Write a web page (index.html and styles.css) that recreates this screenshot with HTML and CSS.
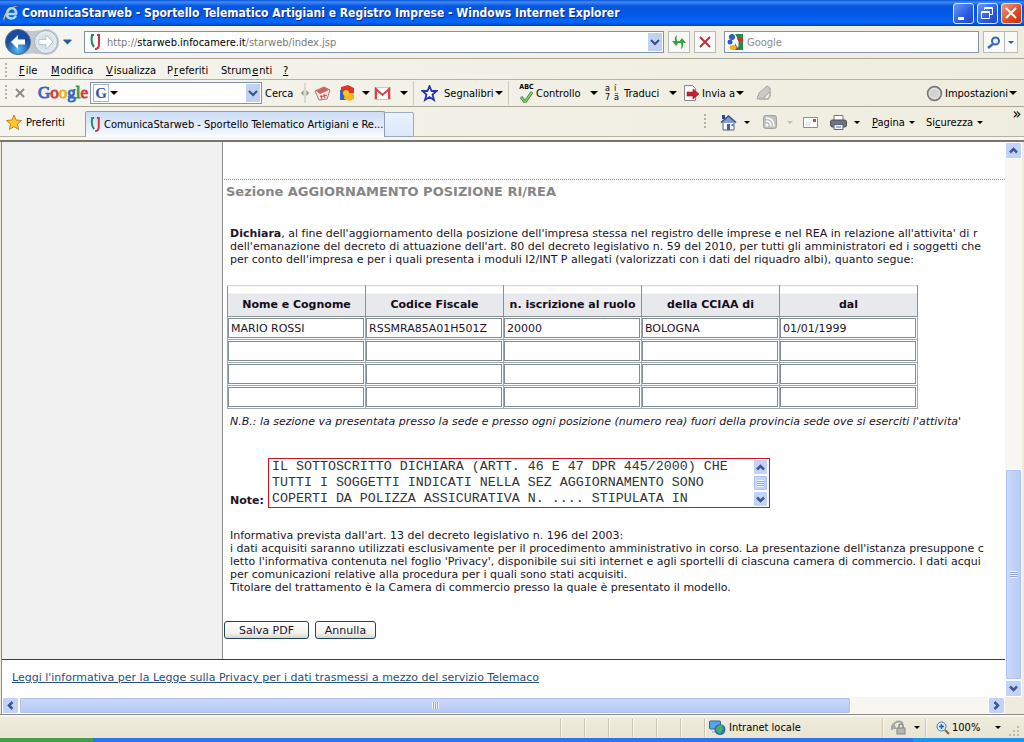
FILE: index.html
```html
<!DOCTYPE html>
<html lang="it">
<head>
<meta charset="utf-8">
<title>ComunicaStarweb</title>
<link rel="stylesheet" href="styles.css">
</head>
<body>
<header class="titlebar">
  <svg width="17" height="18" viewBox="0 0 17 18"><path d="M4 10h10c1-7-8-8-9-1-1 6 6 7 9 3" fill="none" stroke="#9fdcff" stroke-width="2.600"/><path d="M2 17C-1 13 8 1 16 2c-6 1-13 8-14 15" fill="#e8c85a"/></svg>
  <h1 class="caption">ComunicaStarweb - Sportello Telematico Artigiani e Registro Imprese - Windows Internet Explorer</h1>
  <button class="win" aria-label="Riduci a icona"><svg width="18" height="18"><path d="M4 13h6v3H4z" fill="#fff"/></svg></button>
  <button class="win" aria-label="Ripristina"><svg width="18" height="18" fill="none" stroke="#fff"><path d="M6.500 6V3.500h8v7H12M6 4.500h9M3.500 7.500h8v7h-8zM3 8.500h9"/></svg></button>
  <button class="win close" aria-label="Chiudi"><svg width="18" height="18"><path d="M4 4l10 10M14 4L4 14" stroke="#fff" stroke-width="2"/></svg></button>
</header>

<section class="addressbar">
  <div class="nav">
    <svg width="54" height="28" viewBox="0 0 54 28">
      <defs>
        <radialGradient id="blue" cy=".8"><stop offset="0" stop-color="#55c0f5"/><stop offset="1" stop-color="#1c4a9c"/></radialGradient>
        <radialGradient id="pale"><stop offset="0" stop-color="#c2d2e2"/><stop offset="1" stop-color="#e6edf3"/></radialGradient>
      </defs>
      <path d="M13 1q14 4 28 0a13 13 0 010 26q-14-3-28 0a13 13 0 010-26z" fill="#c3c8ce"/>
      <circle cx="13" cy="14" r="12.500" fill="url(#blue)" stroke="#50698f"/>
      <circle cx="41" cy="14" r="11.500" fill="url(#pale)" stroke="#a4b0be"/>
      <path d="M6 14l7-7v4.500h7v5h-7V21z" fill="#fff"/>
      <path d="M48 14l-7-7v4.500h-7v5h7V21z" fill="#fff" stroke="#a7b8ca" stroke-width=".7"/>
    </svg>
    <svg width="9" height="6"><path d="M.5.500h8v1l-4 4-4-4z" fill="#2a5c9c"/></svg>
  </div>
  <div class="address">
    <svg width="11" height="16" viewBox="0 0 11 16"><path d="M4 1H2Q.500 9 4 13" fill="none" stroke="#1c8562" stroke-width="2"/><path d="M7 1h2v9q0 5-4 5" fill="none" stroke="#d03048" stroke-width="2"/></svg>
    <p class="url">http://<span class="host">starweb.infocamere.it</span>/starweb/index.jsp</p>
    <button class="drop" aria-label="Mostra indirizzi"><svg width="10" height="7"><path d="M1 1l4 4 4-4" fill="none" stroke="#33518c" stroke-width="2"/></svg></button>
  </div>
  <button class="sq" aria-label="Aggiorna"><svg width="16" height="16"><path d="M6 1q-3 2-2 6H1l4 5 4-5H6q-1-3 0-6zM10 15q3-2 2-6h3l-4-5-4 5h3q1 3 0 6z" fill="#37a343"/></svg></button>
  <button class="sq" aria-label="Interrompi"><svg width="12" height="12"><path d="M1 1l10 10M11 1L1 11" stroke="#b5343c" stroke-width="2"/></svg></button>
  <div class="search">
    <svg width="16" height="16"><path d="M8 0h8v16h-6q4-8-2-16z" fill="#20904a"/><path d="M10 3h6v5q-6 1-6-5" fill="#d92e2e"/><path d="M8 16V9l4 7z" fill="#d92e2e"/><circle cx="5" cy="3" r="3" fill="#2d5fb8"/><circle cx="3" cy="8" r="2.500" fill="#2d5fb8"/><ellipse cx="6" cy="13.500" rx="3.500" ry="2.500" fill="#f0b018"/></svg>
    <input class="field" type="text" placeholder="Google" aria-label="Cerca con Google">
  </div>
  <div class="go">
    <button class="gobtn" aria-label="Cerca"><svg width="14" height="13"><circle cx="8.500" cy="5" r="3.500" fill="#e2efff" stroke="#3a68b0" stroke-width="2"/><path d="M6 8l-5 4" stroke="#3a68b0" stroke-width="2.500"/></svg></button>
    <button class="gobtn" aria-label="Opzioni di ricerca"><i class="caret blue"></i></button>
  </div>
</section>

<nav class="menubar">
  <i class="grip"></i>
  <button class="flat"><u>F</u>ile</button>
  <button class="flat"><u>M</u>odifica</button>
  <button class="flat"><u>V</u>isualizza</button>
  <button class="flat">P<u>r</u>eferiti</button>
  <button class="flat">Strum<u>e</u>nti</button>
  <button class="flat"><u>?</u></button>
</nav>

<section class="googlebar">
  <i class="grip"></i>
  <button class="flat" aria-label="Chiudi barra"><svg width="10" height="10"><path d="M1 1l8 8M9 1L1 9" stroke="#8a8a86" stroke-width="2"/></svg></button>
  <span class="logo"><span class="b">G</span><span class="r">o</span><span class="y">o</span><span class="b">g</span><span class="g">l</span><span class="r">e</span></span>
  <div class="gbox">
    <span class="glyph">G</span><i class="caret"></i>
    <input class="field" type="text" aria-label="Testo da cercare">
    <button class="drop" aria-label="Ricerche recenti"><svg width="10" height="7"><path d="M1 1l4 4 4-4" fill="none" stroke="#33518c" stroke-width="2"/></svg></button>
  </div>
  <button class="flat">Cerca</button>
  <svg width="8" height="20"><path d="M4 0v20" stroke="#c5c2b2"/><path d="M2.500 7v6L0 10zM5.500 7v6L8 10z" fill="#8f8f8a"/></svg>
  <svg width="17" height="16" viewBox="0 0 17 16"><path d="M1 6l9-4 6 3-3 9-8 1z" fill="#f7e6e2" stroke="#9c7c7a"/><path d="M2 6l8-4 5 3-9 4z" fill="#d0605c"/><path d="M7 10l1 4M10 9l1 4M6 12l7-2" stroke="#c05050" fill="none"/></svg>
  <svg width="16" height="16"><path d="M1 5h6v10H1z" fill="#2e62c4"/><path d="M6 6h9v8l-4 2-6-2z" fill="#f4b81e"/><path d="M2 2l7-2 6 3v5H8L2 6z" fill="#df3428"/><circle cx="7" cy="8" r="3" fill="#f4c81e"/></svg>
  <i class="caret"></i>
  <svg width="17" height="13"><path d="M.5.500h16v12H.5z" fill="#fff" stroke="#ddc0ba"/><path d="M2 12V2l6.500 6L15 2v10" fill="none" stroke="#d8434a" stroke-width="2"/></svg>
  <i class="caret"></i>
  <i class="rule"></i>
  <svg width="17" height="17"><path d="M8.500 1l2 5h5l-4 3.500 1.500 5.500-4.500-3L4 15l1.500-5.500-4-3.500h5z" fill="#fff" stroke="#2836b4" stroke-width="1.800"/></svg>
  <button class="flat">Segnalibri<i class="caret"></i></button>
  <i class="rule"></i>
  <span class="spell"><span class="abc">ABC</span><svg width="13" height="12"><path d="M1 6l4 5 7-10" fill="none" stroke="#3c7a34" stroke-width="3"/><path d="M1 6l4 5 7-10" fill="none" stroke="#8bd070" stroke-width="1.500"/></svg></span>
  <button class="flat">Controllo</button>
  <i class="caret"></i>
  <span class="tr"><span>a</span><span>í</span><span>7</span><span>ä</span></span>
  <button class="flat">Traduci</button>
  <i class="caret"></i>
  <svg width="17" height="16"><path d="M1.500.500h8l3 3v12h-11z" fill="#fff" stroke="#8b8b92"/><path d="M4 7h6V4l6 5-6 5v-3H4z" fill="#c8202c" stroke="#951520" stroke-width=".6"/></svg>
  <button class="flat">Invia a<i class="caret"></i></button>
  <svg width="15" height="16"><path d="M1 14l2-6 8-7q4 1 3 5L8 13z" fill="#c9c9c5" stroke="#a5a5a1"/><path d="M3 14h9l2-3V6" fill="none" stroke="#b8b8b4" stroke-width="2"/></svg>
  <span></span>
  <svg width="17" height="17"><circle cx="8.500" cy="8.500" r="7" fill="#bdbdb9" stroke="#777" stroke-width="1.500"/><circle cx="8.500" cy="8.500" r="5" fill="#d2d2ce" stroke="#eee"/></svg>
  <button class="flat">Impostazioni<i class="caret"></i></button>
</section>

<section class="tabbar">
  <button class="fav"><svg width="16" height="16"><path d="M8 1l2 5 5.500.500-4 3.500 1 5.500L8 12.500l-4.500 3 1-5.500-4-3.500L6 6z" fill="#ffc62e" stroke="#c4821c"/></svg>Preferiti</button>
  <div class="tabs">
    <button class="tab"><svg width="11" height="15" viewBox="0 0 11 16"><path d="M4 1H2Q.500 9 4 13" fill="none" stroke="#1c8562" stroke-width="2"/><path d="M7 1h2v9q0 5-4 5" fill="none" stroke="#d03048" stroke-width="2"/></svg><span class="tabname">ComunicaStarweb - Sportello Telematico Artigiani e Re...</span></button>
    <button class="newtab" aria-label="Nuova scheda"></button>
  </div>
  <div class="commands">
    <i class="grip"></i>
    <svg width="17" height="17"><path d="M3 8h11v8H3z" fill="#f2f5fb" stroke="#53648c"/><path d="M1 8.500L8.500 2 16 8.500" fill="#7f9bd0" stroke="#34508a" stroke-width="1.500"/><path d="M2 1h3v4H2z" fill="#2f4b85"/><path d="M7 10h3v6H7z" fill="#3f5f9d"/><path d="M11.500 10h2v2h-2z" fill="#3a83c8"/></svg>
    <i class="caret small"></i>
    <svg width="14" height="14"><rect x=".5" y=".5" width="13" height="13" rx="2" fill="#c0c0bc" stroke="#a3a39f"/><circle cx="4" cy="10" r="1.500" fill="#fff"/><path d="M3 6q5 0 5 5.500M3 3q8 0 8 8.500" fill="none" stroke="#fff" stroke-width="1.500"/></svg>
    <i class="caret small off"></i>
    <svg width="15" height="11"><path d="M.5.500h14v10H.5z" fill="#fff" stroke="#8e8e8c"/><path d="M10 2h3v3h-3z" fill="#d04848"/><path d="M3 6h5M3 8h4" stroke="#d4d4d4"/></svg>
    <svg width="17" height="15"><path d="M4 .500h9V6H4z" fill="#fff" stroke="#777"/><rect x=".5" y="5" width="16" height="7" rx="2" fill="#70747c" stroke="#4b4f58"/><path d="M4 9.500h9v5H4z" fill="#eef4fb" stroke="#5a6578"/><path d="M6 12h5" stroke="#4a7cc0"/></svg>
    <i class="caret small"></i>
    <button class="flat"><span><u>P</u>agina</span><i class="caret small"></i></button>
    <button class="flat"><span>Si<u>c</u>urezza</span><i class="caret small"></i></button>
    <button class="flat more" aria-label="Altri comandi">»</button>
  </div>
</section>

<div class="viewport">
  <main class="page">
    <div class="columns">
      <aside class="side"></aside>
      <form class="content">
        <h2 class="heading">Sezione AGGIORNAMENTO POSIZIONE RI/REA</h2>
        <p class="text"><strong>Dichiara</strong>, al fine dell'aggiornamento della posizione dell'impresa stessa nel registro delle imprese e nel REA in relazione all'attivita' di r<br>dell'emanazione del decreto di attuazione dell'art. 80 del decreto legislativo n. 59 del 2010, per tutti gli amministratori ed i soggetti che<br>per conto dell'impresa e per i quali presenta i moduli I2/INT P allegati (valorizzati con i dati del riquadro albi), quanto segue:</p>
        <table class="grid">
          <thead>
            <tr><th>Nome e Cognome</th><th>Codice Fiscale</th><th>n. iscrizione al ruolo</th><th>della CCIAA di</th><th>dal</th></tr>
          </thead>
          <tbody>
            <tr><td><input type="text" aria-label="Nome e Cognome 1" value="MARIO ROSSI"></td><td><input type="text" aria-label="Codice Fiscale 1" value="RSSMRA85A01H501Z"></td><td><input type="text" aria-label="n. iscrizione al ruolo 1" value="20000"></td><td><input type="text" aria-label="della CCIAA di 1" value="BOLOGNA"></td><td><input type="text" aria-label="dal 1" value="01/01/1999"></td></tr>
            <tr><td><input type="text" aria-label="Nome e Cognome 2"></td><td><input type="text" aria-label="Codice Fiscale 2"></td><td><input type="text" aria-label="n. iscrizione al ruolo 2"></td><td><input type="text" aria-label="della CCIAA di 2"></td><td><input type="text" aria-label="dal 2"></td></tr>
            <tr><td><input type="text" aria-label="Nome e Cognome 3"></td><td><input type="text" aria-label="Codice Fiscale 3"></td><td><input type="text" aria-label="n. iscrizione al ruolo 3"></td><td><input type="text" aria-label="della CCIAA di 3"></td><td><input type="text" aria-label="dal 3"></td></tr>
            <tr><td><input type="text" aria-label="Nome e Cognome 4"></td><td><input type="text" aria-label="Codice Fiscale 4"></td><td><input type="text" aria-label="n. iscrizione al ruolo 4"></td><td><input type="text" aria-label="della CCIAA di 4"></td><td><input type="text" aria-label="dal 4"></td></tr>
          </tbody>
        </table>
        <p class="text nb">N.B.: la sezione va presentata presso la sede e presso ogni posizione (numero rea) fuori della provincia sede ove si eserciti l'attivita'</p>
        <div class="notes">
          <label for="note">Note:</label>
          <div class="notebox">
            <textarea id="note" rows="3">IL SOTTOSCRITTO DICHIARA (ARTT. 46 E 47 DPR 445/2000) CHE
TUTTI I SOGGETTI INDICATI NELLA SEZ AGGIORNAMENTO SONO
COPERTI DA POLIZZA ASSICURATIVA N. .... STIPULATA IN</textarea>
            <div class="vbar mini">
              <i class="arrow"><svg width="9" height="7"><path d="M1 5.500l3.500-3.500L8 5.500" fill="none" stroke="#41578c" stroke-width="2.500"/></svg></i>
              <i class="thumb"><i class="ridges"></i></i>
              <i class="arrow"><svg width="9" height="7"><path d="M1 1.500L4.500 5 8 1.500" fill="none" stroke="#41578c" stroke-width="2.500"/></svg></i>
            </div>
          </div>
        </div>
        <p class="text">Informativa prevista dall'art. 13 del decreto legislativo n. 196 del 2003:<br>i dati acquisiti saranno utilizzati esclusivamente per il procedimento amministrativo in corso. La presentazione dell'istanza presuppone c<br>letto l'informativa contenuta nel foglio 'Privacy', disponibile sui siti internet e agli sportelli di ciascuna camera di commercio. I dati acqui<br>per comunicazioni relative alla procedura per i quali sono stati acquisiti.<br>Titolare del trattamento è la Camera di commercio presso la quale è presentato il modello.</p>
        <div class="actions">
          <button type="button" class="xp wide">Salva PDF</button>
          <button type="button" class="xp">Annulla</button>
        </div>
      </form>
    </div>
    <footer class="foot"><a href="#privacy">Leggi l'informativa per la Legge sulla Privacy per i dati trasmessi a mezzo del servizio Telemaco</a></footer>
  </main>
  <div class="vbar main">
    <i class="arrow"><svg width="9" height="7"><path d="M1 5.500l3.500-3.500L8 5.500" fill="none" stroke="#41578c" stroke-width="2.500"/></svg></i>
    <i class="thumb"><i class="ridges"></i></i>
    <i class="arrow"><svg width="9" height="7"><path d="M1 1.500L4.500 5 8 1.500" fill="none" stroke="#41578c" stroke-width="2.500"/></svg></i>
  </div>
  <div class="hbar">
    <i class="arrow"><svg width="7" height="9"><path d="M5.500 1L2 4.500 5.500 8" fill="none" stroke="#41578c" stroke-width="2.500"/></svg></i>
    <i class="thumb"><i class="ridges upright"></i></i>
    <i class="arrow"><svg width="7" height="9"><path d="M1.500 1L5 4.500 1.500 8" fill="none" stroke="#41578c" stroke-width="2.500"/></svg></i>
  </div>
  <i class="corner"></i>
</div>

<section class="status">
  <span></span><i class="pane"></i><i class="pane"></i><i class="pane"></i><i class="pane"></i><i class="pane"></i><i class="pane"></i>
  <span class="pane zone"><svg width="17" height="16"><rect x=".5" y="1" width="11" height="8" rx="1" fill="#52a8e8" stroke="#3a5c94"/><path d="M3 11h6v2H3z" fill="#b9c4d4"/><circle cx="11" cy="9.500" r="5.500" fill="#2b6fc0"/><path d="M7 8q3-4 6-3l1 4-3 5q-4-2-4-6" fill="#48b060"/></svg>Intranet locale</span>
  <span class="pane guard"><svg width="16" height="15"><path d="M1 10a7 7 0 0111-7" fill="none" stroke="#a5a5a2" stroke-width="2"/><path d="M0 9l3-5 3 5z" fill="#a5a5a2"/><rect x="6" y="8" width="8" height="6" fill="#b5b5b2" stroke="#858583"/><path d="M8 8V5q2-2 4 0v3" fill="none" stroke="#858583" stroke-width="1.500"/></svg><i class="caret small"></i></span>
  <span class="pane zoom"><svg width="14" height="14"><circle cx="5.500" cy="5.500" r="4.500" fill="#d8ecff" stroke="#3a78c0"/><path d="M3 5.500h5M5.500 3v5" stroke="#2560b0" stroke-width="1.500"/><path d="M9 9l4 4" stroke="#8a6040" stroke-width="2"/></svg><span>100%</span><i class="caret small"></i></span>
  <svg class="size" width="12" height="12"><path d="M9 1h2v2H9zM5 5h2v2H5zM9 5h2v2H9zM1 9h2v2H1zM5 9h2v2H5zM9 9h2v2H9z" fill="#c0bca6"/></svg>
</section>
<div class="taskbar"><i class="start"></i><i class="tray"></i></div>
</body>
</html>
```
FILE: styles.css
```css
* { box-sizing: border-box; }
html, body { height: 100%; }
body {
  margin: 0;
  display: flex;
  flex-direction: column;
  overflow: hidden;
  background: #efecdd;
  color: #000;
  font: 11px/13px "DejaVu Sans Condensed", "DejaVu Sans", sans-serif;
  font-variant-ligatures: none;
}
svg { display: block; flex: none; }
button, input, textarea { font: inherit; color: inherit; margin: 0; padding: 0; }
button { background: none; border: 0; }
p, h1, h2 { margin: 0; }

.titlebar {
  display: flex;
  align-items: center;
  gap: 3px;
  height: 26px;
  padding: 0 2px;
  background: linear-gradient(#0a52d8, #3d8cf5 2px, #0556e0 6px, #0459ea 16px, #0568fb 22px, #0340bc);
  flex: none;
}
.caption {
  flex: 1;
  overflow: hidden;
  color: #fff;
  font: bold 12px/18px "DejaVu Sans Condensed", "DejaVu Sans", sans-serif;
  text-shadow: 1px 1px #0a2a80;
  white-space: nowrap;
}
.win {
  width: 21px;
  height: 21px;
  border: 1px solid #e4ecfb;
  border-radius: 3px;
  background: linear-gradient(135deg, #6c98f2, #2a5be0 60%, #1f48c4);
}
.win.close { background: linear-gradient(135deg, #ee9a7c, #de4a22 60%, #b8350f); }

.addressbar {
  display: grid;
  grid-template-columns: 80px 1fr 22px 22px 259px 35px;
  gap: 4px;
  align-items: center;
  height: 33px;
  padding: 0 6px 0 0;
  border-bottom: 1px solid #aaa796;
  background: linear-gradient(90deg, #f6f5f0, #efedde);
  flex: none;
}
.nav { display: flex; align-items: center; gap: 4px; padding-left: 5px; }
.address, .search, .gbox {
  display: flex;
  align-items: center;
  height: 22px;
  border: 1px solid #8095ad;
  background: #fff;
}
.address { padding: 0 1px 0 5px; gap: 6px; }
.url { flex: 1; color: #7b7b7b; white-space: nowrap; }
.host { color: #000; }
.drop {
  display: grid;
  place-items: center;
  width: 14px;
  height: 18px;
  background: #c0d1f4;
  flex: none;
}
.sq, .gobtn { display: grid; place-items: center; border: 1px solid #b7babd; background: #f9f9f8; height: 22px; }
.search { margin-left: 4px; padding-left: 2px; gap: 4px; }
.field { flex: 1; min-width: 0; border: 0; background: none; outline: 0; }
.field::placeholder { color: #8a8a8a; opacity: 1; }
.go { display: grid; grid-template-columns: 22px 13px; }
.gobtn + .gobtn { border-left: 0; }

.caret {
  display: inline-block;
  border: 4px solid transparent;
  border-top-color: #000;
  border-bottom: 0;
  width: 0;
  height: 0;
  flex: none;
}
.caret.small { border-width: 3px 3px 0; }
.caret.blue { border-width: 3px 3px 0; border-top-color: #2a5c9c; }
.caret.off { border-top-color: #bbb; }
.grip {
  width: 2px;
  height: 16px;
  background: repeating-linear-gradient(#b5b2a2 0 2px, transparent 2px 4px);
}
.flat { display: inline-flex; align-items: center; gap: 1px; white-space: nowrap; }

.menubar {
  display: grid;
  grid-template-columns: 14px 32px 55px 61px 54px 62px 20px;
  align-items: center;
  height: 21px;
  padding: 3px 0 0 5px;
  border-bottom: 1px solid #b5b2a2;
  background: linear-gradient(90deg, #f5f4ee, #efedde);
  flex: none;
}
.googlebar {
  display: grid;
  grid-template-columns: 10px 23px 52px 175px 36px 13px 25px 23px 12px 26px 13px 8px 23px 64px 9px 19px 54px 15px 19px 45px 14px 19px 54px 15px 1fr 19px 75px;
  align-items: center;
  height: 27px;
  padding: 0 4px 0 5px;
  border-bottom: 1px solid #aaa796;
  background: linear-gradient(90deg, #f5f4ee, #efedde);
  flex: none;
}
.logo { font: 17px/20px "Liberation Serif", serif; -webkit-text-stroke: 1px; }
.logo .b { color: #3a66c8; }
.logo .r { color: #d0403c; }
.logo .y { color: #e4b424; }
.logo .g { color: #34a04c; }
.gbox { width: 172px; padding: 0 1px 0 2px; gap: 1px; }
.glyph { border: 1px solid #a9b4c4; color: #2f56a8; width: 16px; text-align: center; font: bold 15px/16px "Liberation Serif", serif; }
.rule { width: 1px; height: 24px; background: #cbc8b8; }
.spell { display: grid; justify-items: center; }
.abc { font: bold 7px/7px "DejaVu Sans Condensed", sans-serif; }
.tr { display: grid; grid-template-columns: 9px 7px; font-size: 9px; line-height: 9px; }

.tabbar {
  display: flex;
  align-items: center;
  height: 35px;
  border-bottom: 2px solid #77756c;
  background: linear-gradient(transparent 29px, #b5b2a2 29px 30px, #f6f5f0 30px), linear-gradient(90deg, #f5f4ee, #efedde);
  flex: none;
}
.fav { display: flex; align-items: center; gap: 4px; width: 85px; padding: 0 0 3px 6px; height: 33px; }
.tabs { display: flex; align-items: flex-end; align-self: flex-start; height: 30px; flex: 1; min-width: 0; }
.tab {
  display: flex;
  align-items: center;
  gap: 3px;
  min-width: 299px;
  height: 26px;
  padding: 0 1px 0 4px;
  border: 1px solid #8f9db4;
  border-bottom: 0;
  border-radius: 2px 2px 0 0;
  background: linear-gradient(#cbddf8, #e4edfb 60%, #fbfcfe);
  text-align: left;
}
.tabname { white-space: nowrap; }
.newtab { width: 29px; height: 25px; border: 1px solid #9aaac0; border-left: 0; border-radius: 0 2px 2px 0; background: linear-gradient(#eaf2fd, #dce9fa); }
.commands {
  display: grid;
  grid-template-columns: 16px 24px 19px 24px 16px 27px 24px 18px 54px 76px 22px;
  align-items: center;
  height: 33px;
  padding: 0 0 3px;
}
.commands .flat { gap: 4px; }
.commands .more { font-size: 16px; align-self: start; justify-self: center; padding-left: 8px; }

.viewport {
  display: grid;
  grid-template: 1fr 17px / 1fr 17px;
  flex: 1;
  min-height: 0;
  margin: 0 2px 0 1px;
  border-left: 1px solid #8e8c82;
}
.page {
  display: flex;
  flex-direction: column;
  min-width: 0;
  min-height: 0;
  overflow: hidden;
  background: #fff;
  font-family: "DejaVu Sans", sans-serif;
}
.columns { display: flex; flex: 1; min-height: 0; }
.side { width: 221px; background: #f1f1f1; border-right: 1px solid #8b8b8b; flex: none; }
.content { flex: 1; min-width: 0; padding: 37px 0 0 1px; overflow: hidden; color: #221428; }
.heading {
  margin-bottom: 24px;
  padding: 3px 2px;
  border-top: 1px dotted #8a8a8a;
  color: #868686;
  font-size: 13px;
  line-height: 17px;
}
.text { padding-left: 6px; white-space: nowrap; }
.grid { width: 691px; margin: 19px 0 0 3px; border-collapse: collapse; table-layout: fixed; }
.grid th {
  height: 31px;
  padding: 7px 0 0;
  border: 1px solid #8b918c;
  border-top-color: #d8d8d4;
  background: linear-gradient(#fff 7px, #e8e9ed 7px);
  color: #140c18;
  white-space: nowrap;
}
.grid td { padding: 1px 1px 1px 0; border: 1px solid #a4a8a6; }
.grid input { display: block; width: 100%; height: 20px; padding: 0 2px; border: 1px solid #808e98; background: #fff; }
.nb { margin-top: 6px; font-style: italic; }
.notes { display: flex; align-items: flex-end; gap: 4px; margin: 30px 0 21px; padding-left: 6px; font-weight: bold; }
.notes label { padding-bottom: 1px; }
.notebox { display: flex; width: 502px; border: 1px solid #cc1626; }
.notebox textarea {
  display: block;
  flex: 1;
  min-width: 0;
  height: 48px;
  padding: 0 3px;
  border: 0;
  outline: 0;
  overflow: hidden;
  resize: none;
  background: #fff;
  color: #333;
  font: 10pt/16px "Liberation Mono", monospace;
  white-space: pre;
}
.actions { display: flex; gap: 6px; margin-top: 27px; }
.xp {
  width: 61px;
  height: 18px;
  border: 1px solid #1d4468;
  border-radius: 3px;
  background: linear-gradient(#fff, #f3f2ec 70%, #d9d5c8);
}
.xp.wide { width: 85px; }
.foot { height: 38px; padding: 11px 10px; border-top: 1px solid #1d4468; flex: none; white-space: nowrap; }
.foot a { color: #27507c; }

.vbar, .hbar { display: flex; background: #f7f6f1; }
.vbar { flex-direction: column; }
.arrow, .thumb { display: grid; place-items: center; border: 1px solid #fff; border-radius: 2px; background: #c2d3fb; }
.arrow { width: 17px; height: 17px; flex: none; }
.thumb { background: linear-gradient(90deg, #cbd9fc, #b9cbf6); box-shadow: inset 0 0 0 1px #b0c3f0; }
.hbar .thumb { background: linear-gradient(#cbd9fc, #b5c8f6); }
.ridges { width: 7px; height: 7px; background: repeating-linear-gradient(#eef4fe 0 1px, #8ca5de 1px 2px); }
.ridges.upright { background: repeating-linear-gradient(90deg, #eef4fe 0 1px, #8ca5de 1px 2px); }
.vbar.main .thumb { height: 38%; margin-top: auto; }
.hbar .thumb { width: 83%; margin-right: auto; }
.mini { width: 16px; padding-right: 1px; }
.mini .arrow { width: 15px; height: 16px; }
.mini .thumb { flex: 1; }
.corner { background: #efecdd; }

.status {
  display: grid;
  grid-template-columns: 1fr repeat(6, 24px) 178px 43px 83px 15px;
  height: 24px;
  padding: 3px 1px 1px 0;
  border-top: 1px solid #8e8c82;
  box-shadow: inset 0 2px #f8f7f0;
  background: linear-gradient(#efecdd, #e9e5d3);
  align-items: center;
  flex: none;
}
.pane { display: flex; align-items: center; height: 18px; border-left: 1px solid #c9c5b2; box-shadow: inset 1px 0 #fbfaf4; }
.zone { gap: 3px; padding-left: 4px; }
.guard { gap: 7px; padding-left: 8px; }
.zoom { gap: 2px; padding-left: 10px; }
.zoom .caret { margin-left: auto; margin-right: 7px; }
.size { align-self: end; }
.taskbar { display: flex; justify-content: space-between; height: 4px; background: #2f74ee; flex: none; }
.start { width: 93px; background: #4a9a4a; }
.tray { width: 111px; background: #1a96ec; }
```
